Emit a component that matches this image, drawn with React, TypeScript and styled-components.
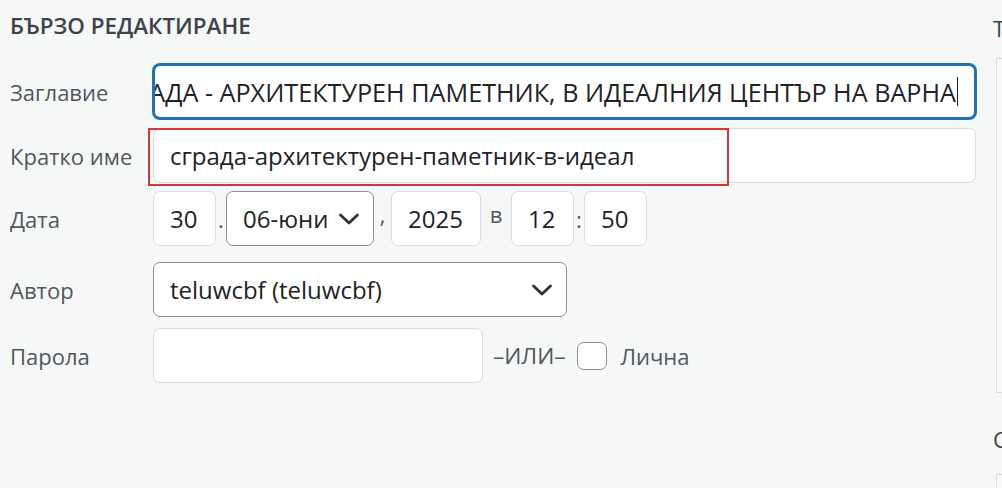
import styled, { createGlobalStyle } from 'styled-components'

const GlobalStyle = createGlobalStyle`
    html, body {
        margin: 0;
        background: #f6f7f7;
    }
    body {
        font-family: 'Open Sans', 'Noto Sans', sans-serif;
        color: #1d2327;
    }
`

const Page = styled.div`
    display: flex;
    height: 488px;
    overflow: hidden;
    padding-left: 10px;
`

const Main = styled.div`
    width: 966px;
    flex: none;
`

const Heading = styled.h4`
    margin: 0;
    height: 64px;
    padding-top: 12px;
    box-sizing: border-box;
    font-size: 22.4px;
    font-weight: 600;
    color: #3c434a;
    line-height: 28px;
`

const Field = styled.div<{ $gap?: number }>`
    display: grid;
    grid-template-columns: 143px 1fr;
    align-items: center;
    margin-bottom: ${({ $gap }) => $gap ?? 9}px;
    position: relative;
`

const Label = styled.span`
    font-size: 22px;
    color: #50575e;
`

const Box = styled.div<{ $w?: number; $focus?: boolean; $dark?: boolean }>`
    height: 55px;
    box-sizing: border-box;
    width: ${({ $w }) => ($w ? `${$w}px` : '100%')};
    background: #fff;
    border: ${({ $focus, $dark }) =>
        $focus ? '2px solid #2271b1' : $dark ? '1px solid #8c8f94' : '1px solid #dcdcde'};
    box-shadow: ${({ $focus }) => ($focus ? '0 0 0 1px #2271b1' : 'none')};
    border-radius: 7px;
    display: flex;
    align-items: center;
    padding: 0 16px;
    font-size: 24px;
    color: #1d2327;
    white-space: nowrap;
    overflow: hidden;
`

const Scrolled = styled(Box)`
    justify-content: flex-end;
    font-size: 25.2px;
`

const Caret = styled.span`
    display: inline-block;
    width: 1px;
    height: 29px;
    background: #1d2327;
    margin-left: 1px;
    flex: none;
`

const Mark = styled.div`
    position: absolute;
    left: 138px;
    top: 0;
    width: 581px;
    height: 58px;
    border: 2px solid #d63638;
    box-sizing: border-box;
    pointer-events: none;
`

const Inline = styled.div`
    display: flex;
    align-items: center;
`

const Sep = styled.span<{ $w: number; $up?: boolean }>`
    width: ${({ $w }) => $w}px;
    text-align: center;
    font-size: 22px;
    color: #50575e;
    align-self: ${({ $up }) => ($up ? 'flex-start' : 'center')};
    padding-top: ${({ $up }) => ($up ? '8px' : '0')};
`

const Select = styled(Box)`
    justify-content: space-between;
    padding-right: 12px;
`

const Chevron = () => (
    <svg width="24" height="24" viewBox="0 0 24 24" fill="none">
        <path d="M3.5 8 12 16l8.5-8" stroke="#2c3338" strokeWidth="2.8" strokeLinecap="round" strokeLinejoin="round" />
    </svg>
)

const Or = styled.span`
    font-size: 22.5px;
    color: #50575e;
    margin: 0 11px 0 10px;
`

const Check = styled.span`
    width: 30px;
    height: 28px;
    box-sizing: border-box;
    border: 1px solid #8c8f94;
    border-radius: 7px;
    background: #fff;
    margin-right: 14px;
`

const Side = styled.div`
    margin-left: 17px;
    flex: 1;
    display: flex;
    flex-direction: column;
`

const SideTitle = styled.div`
    flex: none;
    height: 58px;
    padding-top: 14px;
    box-sizing: border-box;
    font-size: 22px;
    color: #3c434a;
    line-height: 28px;
    white-space: nowrap;
`

const SideList = styled.div<{ $h: number }>`
    height: ${({ $h }) => $h}px;
    flex: none;
    margin-left: 3px;
    border: 1px solid #dcdcde;
    border-right: none;
    background: #f8f9f9;
    box-sizing: border-box;
`

const SideTitle2 = styled(SideTitle)`
    height: 81px;
    padding-top: 32px;
`

export default function App() {
    return (
        <>
            <GlobalStyle />
            <Page>
                <Main>
                    <Heading>БЪРЗО РЕДАКТИРАНЕ</Heading>
                    <Field>
                        <Label>Заглавие</Label>
                        <Scrolled $focus>
                            СГРАДА - АРХИТЕКТУРЕН ПАМЕТНИК, В ИДЕАЛНИЯ ЦЕНТЪР НА ВАРНА
                            <Caret />
                        </Scrolled>
                    </Field>
                    <Field $gap={8}>
                        <Label>Кратко име</Label>
                        <Box>сграда-архитектурен-паметник-в-идеал</Box>
                        <Mark />
                    </Field>
                    <Field $gap={16}>
                        <Label>Дата</Label>
                        <Inline>
                            <Box $w={63}>30</Box>
                            <Sep $w={10}>.</Sep>
                            <Select $w={148} $dark>
                                06-юни
                                <Chevron />
                            </Select>
                            <Sep $w={17} $up>,</Sep>
                            <Box $w={90}>2025</Box>
                            <Sep $w={30} $up>в</Sep>
                            <Box $w={63}>12</Box>
                            <Sep $w={10}>:</Sep>
                            <Box $w={63}>50</Box>
                        </Inline>
                    </Field>
                    <Field $gap={11}>
                        <Label>Автор</Label>
                        <Select $w={414} $dark>
                            teluwcbf (teluwcbf)
                            <Chevron />
                        </Select>
                    </Field>
                    <Field>
                        <Label>Парола</Label>
                        <Inline>
                            <Box $w={330} />
                            <Or>–ИЛИ–</Or>
                            <Check />
                            <Label>Лична</Label>
                        </Inline>
                    </Field>
                </Main>
                <Side>
                    <SideTitle>Таксономии</SideTitle>
                    <SideList $h={335} />
                    <SideTitle2>Статус</SideTitle2>
                    <SideList $h={40} />
                </Side>
            </Page>
        </>
    )
}
